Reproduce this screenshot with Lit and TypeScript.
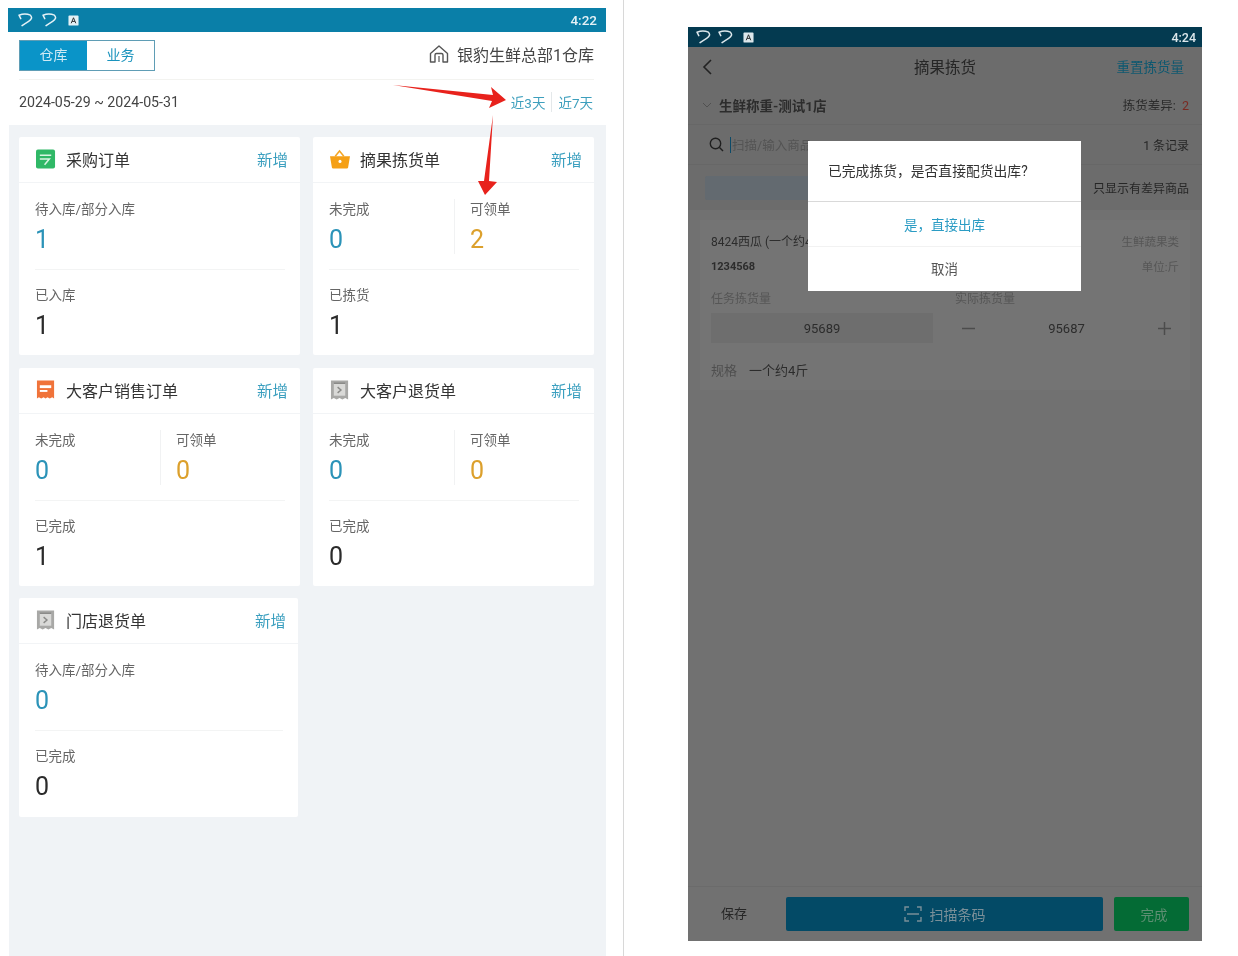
import { LitElement, html, css, svg } from "lit";
import { customElement } from "lit/decorators.js";

const backIcon = (w: number) => html`<svg class="sb-ic" viewBox="0 0 20 16" style="width:${w}px"><path d="M4 6.5 L2 2.5 Q9 0 15 2.5 Q18.5 6 13 9.5 Q9 12 5.5 14.5" fill="none" stroke="currentColor" stroke-width="1.7" stroke-linecap="round" stroke-linejoin="round"/></svg>`;
const aIcon = html`<svg class="sb-a" viewBox="0 0 12 12"><rect x="0.5" y="0.5" width="11" height="11" rx="1" fill="currentColor"/><path d="M3.5 9 L6 3 L8.5 9 M4.5 7 H7.5" fill="none" stroke="#222" stroke-width="1"/></svg>`;

const icons: Record<string, unknown> = {
  buy: svg`<rect x="0" y="0" width="20" height="20" rx="2" fill="#2fb866"/><path d="M4 6 H16 M4 10 H14 L9 16" fill="none" stroke="#d8f5e2" stroke-width="1.6"/>`,
  basket: svg`<path d="M5.5 7 L10 1.5 L14.5 7" fill="none" stroke="#f5a623" stroke-width="1.6"/><path d="M0 7 H21 L19 19 Q19 20 17.5 20 H3.5 Q2 20 2 19 Z" fill="#f5a016"/><circle cx="10.5" cy="12.5" r="1.6" fill="#fff"/>`,
  sale: svg`<path d="M1 0 H19 V19 L17 17.5 L14.5 19 L12 17.5 L10 19 L8 17.5 L5.5 19 L3 17.5 L1 19 Z" fill="#f0733a"/><path d="M4 5 H16 V8 H4 Z" fill="#fff"/><path d="M4 11 H12" stroke="#fff" stroke-width="2"/>`,
  ret: svg`<path d="M1 0 H19 V20 L16 18.5 L13 20 L10 18.5 L7 20 L4 18.5 L1 20 Z" fill="#a8a8a6"/><rect x="4" y="3" width="12" height="13" fill="#d9d9d7"/><path d="M8 7 L11.5 10 L8 13 M4 3 H16" fill="none" stroke="#8a8a88" stroke-width="1.5"/>`,
};

type Metric = { label: string; value: string; tone: string };
type Card = { icon: string; title: string; top: Metric[]; bottom: Metric; narrow?: boolean };

const m = (label: string, value: string, tone: string): Metric => ({ label, value, tone });
const cards: Card[] = [
  { icon: "buy", title: "采购订单", top: [m("待入库/部分入库", "1", "blue")], bottom: m("已入库", "1", "dark") },
  { icon: "basket", title: "摘果拣货单", top: [m("未完成", "0", "blue"), m("可领单", "2", "gold")], bottom: m("已拣货", "1", "dark") },
  { icon: "sale", title: "大客户销售订单", top: [m("未完成", "0", "blue"), m("可领单", "0", "gold")], bottom: m("已完成", "1", "dark") },
  { icon: "ret", title: "大客户退货单", top: [m("未完成", "0", "blue"), m("可领单", "0", "gold")], bottom: m("已完成", "0", "dark") },
  { icon: "ret", title: "门店退货单", top: [m("待入库/部分入库", "0", "blue")], bottom: m("已完成", "0", "dark"), narrow: true },
];

@customElement("app-root")
export class AppRoot extends LitElement {
  static styles = css`
    :host {
      display: flex;
      width: 1238px;
      height: 956px;
      overflow: hidden;
      background: #fff;
      font-family: Roboto, "Noto Sans CJK SC", sans-serif;
      color: #333;
    }
    .left {
      position: relative;
      width: 598px;
      height: 948px;
      margin: 8px 0 0 8px;
      display: flex;
      flex-direction: column;
      filter: blur(0.5px);
      flex: none;
    }
    .status {
      display: flex;
      align-items: center;
      flex: none;
      color: #e4f1f6;
      font-size: 13.5px;
      font-weight: 500;
    }
    .left .status { height: 24px; background: #0a7fa8; padding: 0 9px 0 8px; gap: 4px; }
    .sb-ic { height: 14px; flex: none; }
    .sb-a { width: 11px; height: 11px; margin-left: 4px; flex: none; }
    .time { margin-left: auto; }
    .top {
      height: 48px;
      flex: none;
      display: flex;
      align-items: center;
      justify-content: space-between;
      margin: 0 12px 0 11px;
      border-bottom: 1px solid #f3f3f0;
      box-sizing: border-box;
    }
    .tabs {
      display: flex;
      width: 136px;
      height: 31px;
      box-sizing: border-box;
      border: 1px solid #5f9db5;
      font-size: 14px;
      margin-top: -1px;
    }
    .tab { flex: 1; display: flex; align-items: center; justify-content: center; color: #1a93bd; padding-bottom: 2px; box-sizing: border-box; }
    .tab.on { background: #0a94c8; color: #cfeaf4; flex: 0 0 67px; }
    .wh { display: flex; align-items: center; gap: 8px; font-size: 16px; color: #444; padding-bottom: 3px; }
    .wh svg { width: 20px; height: 20px; }
    .range {
      height: 45px;
      flex: none;
      display: flex;
      align-items: center;
      justify-content: space-between;
      padding: 0 13px 2px 11px;
      box-sizing: border-box;
      font-size: 14.2px;
      color: #444;
    }
    .quick { display: flex; align-items: center; color: #3d9fbd; font-size: 13.5px; }
    .quick span + span { margin-left: 6px; padding-left: 6px; border-left: 1px solid #e4e8ea; }
    .board {
      flex: 1;
      margin-left: 1px;
      background: #f0f3f6;
      padding: 12px 12px 0 10px;
      display: grid;
      grid-template-columns: 281px 281px;
      grid-auto-rows: 218px;
      column-gap: 13px;
      row-gap: 13px;
      align-content: start;
    }
    .card { background: #fff; display: flex; flex-direction: column; border-radius: 2px; }
    .card.narrow { width: 279px; margin-top: -1px; }
    .card-head {
      height: 46px;
      flex: none;
      box-sizing: border-box;
      border-bottom: 1px solid #f2f4f6;
      display: flex;
      align-items: center;
      padding: 0 12px 2px 17px;
      font-size: 16px;
      color: #333;
    }
    .card-head svg { width: 20px; height: 20px; margin-right: 10px; flex: none; }
    .add { margin-left: auto; color: #3b9fbf; font-size: 15.5px; }
    .card-body { padding: 16px 15px 0 16px; }
    .row { display: flex; height: 71px; }
    .row.first { padding-bottom: 15px; height: 55px; border-bottom: 1px solid #f3f4f4; margin-bottom: 15px; }
    .metric { flex: 0 0 125px; box-sizing: border-box; }
    .metric:only-child { flex: 1; }
    .metric + .metric { border-left: 1px solid #f1f2f3; padding-left: 15px; }
    .label { font-size: 13.5px; line-height: 20px; color: #666; }
    .value { font-size: 25px; line-height: 36px; font-weight: 400; margin-top: 3px; }
    .value.blue { color: #2b93b8; }
    .value.gold { color: #dca02c; }
    .value.dark { color: #2b2b2b; }
    .arrows { position: absolute; left: 0; top: 0; width: 598px; height: 210px; pointer-events: none; }

    .sep { width: 1px; flex: none; margin-left: 17px; background: #d8d8d8; }

    .right {
      position: relative;
      width: 514px;
      height: 914px;
      margin: 27px 0 0 64px;
      flex: none;
      background: #717171;
      display: flex;
      flex-direction: column;
      color: #2c2c2c;
      font-size: 12.5px;
      filter: blur(0.6px);
    }
    .right .status { height: 20px; background: #043a50; padding: 0 6px 0 7px; gap: 4px; color: #dce7eb; font-size: 12.5px; }
    .nav {
      height: 40px;
      flex: none;
      display: flex;
      align-items: center;
      justify-content: space-between;
      padding: 0 18px 2px 13px;
      box-sizing: border-box;
      background: #6c6c6c;
      position: relative;
    }
    .nav svg { width: 12px; height: 18px; margin-top: 2px; }
    .nav-title { position: absolute; left: 0; right: 0; text-align: center; font-size: 15.5px; color: #262626; }
    .reset { color: #0e5870; font-size: 13.5px; position: relative; }
    .store {
      height: 38px;
      flex: none;
      display: flex;
      align-items: center;
      padding: 0 13px 2px 14px;
      font-weight: 700;
      font-size: 13.5px;
      background: #6c6c6c;
      border-bottom: 1px solid #676767;
      box-sizing: border-box;
    }
    .store svg { width: 10px; height: 8px; margin-right: 7px; }
    .diff { margin-left: auto; font-weight: 400; font-size: 12.5px; }
    .diff b { color: #7a2a22; font-weight: 400; margin-left: 3px; }
    .search {
      height: 40px;
      flex: none;
      display: flex;
      align-items: center;
      padding: 0 13px 0 21px;
      background: #6c6c6c;
      color: #545454;
      border-bottom: 1px solid #676767;
      box-sizing: border-box;
    }
    .search svg { width: 15px; height: 15px; margin-right: 6px; color: #1f1f1f; }
    .search i { width: 1px; height: 16px; background: #0c4a68; margin-right: 1px; }
    .count { margin-left: auto; color: #262626; font-size: 12px; }
    .filter {
      height: 45px;
      flex: none;
      display: flex;
      align-items: center;
      padding: 0 13px 0 17px;
      background: #6c6c6c;
    }
    .filter-bar { width: 125px; height: 24px; background: #636a70; border-radius: 2px; }
    .only { margin-left: auto; font-size: 12px; color: #262626; }
    .item {
      margin: 10px 12px 0;
      height: 170px;
      flex: none;
      background: #747474;
      padding: 0 11px;
      box-sizing: border-box;
      display: flex;
      flex-direction: column;
    }
    .line { display: flex; justify-content: space-between; align-items: center; }
    .l1 { height: 21px; margin-top: 10px; font-size: 12px; }
    .l2 { height: 20px; margin-top: 5px; font-size: 11px; font-weight: 700; }
    .muted { color: #565656; font-size: 11.5px; font-weight: 400; }
    .qty-labels { display: grid; grid-template-columns: 222px 1fr; column-gap: 22px; margin-top: 11px; height: 20px; align-items: center; color: #565656; font-size: 12px; }
    .qty { display: grid; grid-template-columns: 222px 1fr; column-gap: 22px; margin-top: 6px; height: 30px; }
    .qty-box { background: #6e6e6e; display: flex; align-items: center; justify-content: center; font-size: 13px; }
    .stepper { display: flex; align-items: center; justify-content: space-between; font-size: 13px; padding: 0 8px 0 7px; color: #2c2c2c; }
    .stepper svg { width: 13px; height: 13px; color: #4c4c4c; }
    .spec { display: flex; gap: 12px; margin-top: 16px; height: 20px; align-items: center; font-size: 13px; }
    .spec span:first-child { color: #4f4f4f; }
    .spacer { flex: 1; }
    .bottom {
      height: 55px;
      flex: none;
      box-sizing: border-box;
      padding: 10px 13px 10px 33px;
      background: #717171;
      border-top: 1px solid #6b6b6b;
      display: flex;
      align-items: center;
      gap: 11px;
    }
    .save { width: 54px; font-size: 13px; color: #262626; padding-bottom: 3px; }
    .scan {
      flex: 1;
      height: 34px;
      box-sizing: border-box;
      padding-bottom: 1px;
      background: #034a66;
      border-radius: 2px;
      display: flex;
      align-items: center;
      justify-content: center;
      gap: 8px;
      color: #7a8f98;
      font-size: 14px;
    }
    .scan svg { width: 18px; height: 16px; }
    .done {
      width: 75px;
      height: 34px;
      box-sizing: border-box;
      padding: 0 0 1px 5px;
      background: #046b35;
      border-radius: 2px;
      display: flex;
      align-items: center;
      justify-content: center;
      color: #5f8f73;
      font-size: 13.5px;
    }
    .modal {
      position: absolute;
      left: 120px;
      top: 114px;
      width: 273px;
      height: 150px;
      background: #fff;
      display: flex;
      flex-direction: column;
      text-align: center;
    }
    .msg {
      height: 61px;
      flex: none;
      display: flex;
      align-items: center;
      padding: 0 0 2px 20px;
      font-size: 13.8px;
      color: #333;
      border-bottom: 1px solid #d9d9d9;
      box-sizing: border-box;
    }
    .yes { height: 45px; flex: none; display: flex; align-items: center; justify-content: center; color: #2b9cc4; font-size: 13.5px; border-bottom: 1px solid #f2f2f2; box-sizing: border-box; }
    .no { flex: 1; display: flex; align-items: center; justify-content: center; color: #555; font-size: 13.5px; padding-bottom: 2px; }
  `;

  private metric(x: Metric) {
    return html`<div class="metric"><div class="label">${x.label}</div><div class="value ${x.tone}">${x.value}</div></div>`;
  }

  private card(c: Card) {
    return html`<div class="card ${c.narrow ? "narrow" : ""}">
      <div class="card-head">
        <svg viewBox="0 0 21 20">${icons[c.icon]}</svg>
        <span>${c.title}</span>
        <span class="add">新增</span>
      </div>
      <div class="card-body">
        <div class="row first">${c.top.map((x) => this.metric(x))}</div>
        <div class="row">${this.metric(c.bottom)}</div>
      </div>
    </div>`;
  }

  render() {
    return html`
      <section class="left">
        <div class="status">${backIcon(20)}${backIcon(20)}${aIcon}<span class="time">4:22</span></div>
        <div class="top">
          <div class="tabs"><div class="tab on">仓库</div><div class="tab">业务</div></div>
          <div class="wh">
            <svg viewBox="0 0 20 20"><path d="M1.5 9.5 L10 2 L18.5 9.5 V18 H14 V11 Q14 9.5 12.5 9.5 H7.5 Q6 9.5 6 11 V18 H1.5 Z" fill="none" stroke="#555" stroke-width="1.4" stroke-linejoin="round"/><path d="M10 12 V18" stroke="#555" stroke-width="1.2"/></svg>
            <span>银豹生鲜总部1仓库</span>
          </div>
        </div>
        <div class="range">
          <span>2024-05-29 ~ 2024-05-31</span>
          <div class="quick"><span>近3天</span><span>近7天</span></div>
        </div>
        <div class="board">${cards.map((c) => this.card(c))}</div>
        <svg class="arrows" viewBox="0 0 598 210">
          <path d="M385 77 L485 87 L483 79 L498 92 L481 100 L484 93 Z" fill="#e8221c"/>
          <path d="M485 107 L481 173 L489 174 L477 187 L470 173 L476 173 Z" fill="#e8221c"/>
        </svg>
      </section>
      <div class="sep"></div>
      <section class="right">
        <div class="status">${backIcon(18)}${backIcon(18)}${aIcon}<span class="time">4:24</span></div>
        <div class="nav">
          <svg viewBox="0 0 12 18"><path d="M10 2 L3 9 L10 16" fill="none" stroke="#222" stroke-width="1.6"/></svg>
          <div class="nav-title">摘果拣货</div>
          <span class="reset">重置拣货量</span>
        </div>
        <div class="store">
          <svg viewBox="0 0 10 8"><path d="M1 2 L5 6 L9 2" fill="none" stroke="#505050" stroke-width="1"/></svg>
          <span>生鲜称重-测试1店</span>
          <span class="diff">拣货差异: <b>2</b></span>
        </div>
        <div class="search">
          <svg viewBox="0 0 15 15"><circle cx="6.5" cy="6.5" r="5.2" fill="none" stroke="currentColor" stroke-width="1.4"/><path d="M10.5 10.5 L14 14" stroke="currentColor" stroke-width="1.4"/></svg>
          <i></i><span>扫描/输入商品</span>
          <span class="count">1 条记录</span>
        </div>
        <div class="filter"><div class="filter-bar"></div><span class="only">只显示有差异商品</span></div>
        <div class="item">
          <div class="line l1"><span>8424西瓜 (一个约4斤)</span><span class="muted">生鲜蔬果类</span></div>
          <div class="line l2"><span>1234568</span><span class="muted">单位:斤</span></div>
          <div class="qty-labels"><span>任务拣货量</span><span>实际拣货量</span></div>
          <div class="qty">
            <div class="qty-box">95689</div>
            <div class="stepper">
              <svg viewBox="0 0 13 13"><path d="M0 6.5 H13" stroke="currentColor" stroke-width="1.5"/></svg>
              <span>95687</span>
              <svg viewBox="0 0 13 13"><path d="M0 6.5 H13 M6.5 0 V13" stroke="currentColor" stroke-width="1.5"/></svg>
            </div>
          </div>
          <div class="spec"><span>规格</span><span>一个约4斤</span></div>
        </div>
        <div class="spacer"></div>
        <div class="bottom">
          <span class="save">保存</span>
          <div class="scan">
            <svg viewBox="0 0 18 16"><path d="M1 5 V1 H5 M13 1 H17 V5 M1 11 V15 H5 M13 15 H17 V11 M3 8 H15" fill="none" stroke="currentColor" stroke-width="1.4"/></svg>
            <span>扫描条码</span>
          </div>
          <div class="done">完成</div>
        </div>
        <div class="modal">
          <div class="msg">已完成拣货，是否直接配货出库?</div>
          <div class="yes">是，直接出库</div>
          <div class="no">取消</div>
        </div>
      </section>
    `;
  }
}
